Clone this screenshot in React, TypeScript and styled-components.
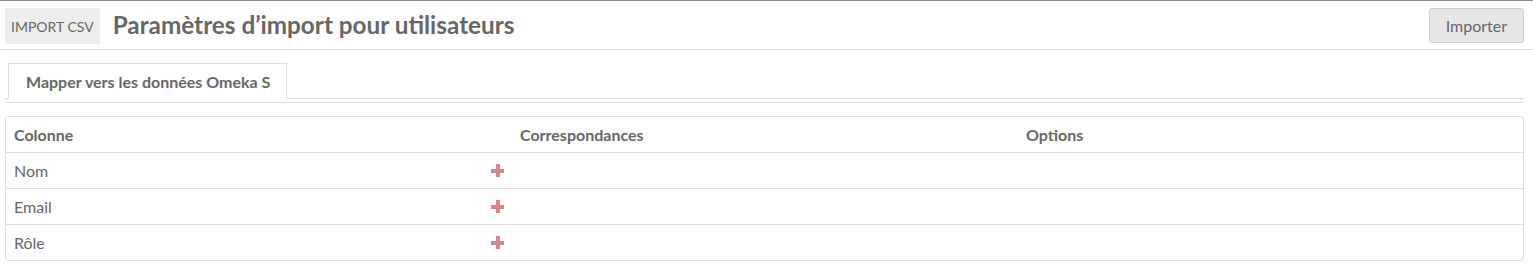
import React from "react";
import styled, { createGlobalStyle } from "styled-components";

const Global = createGlobalStyle`
  html, body { margin: 0; padding: 0; background: #fff; }
  body { font-family: Lato, "Open Sans", sans-serif; color: #676767; }
  * { box-sizing: border-box; }
`;

const Page = styled.div`
  border-top: 1px solid #8a8a8a;
  width: 1533px;
`;

const Header = styled.header`
  display: flex;
  align-items: center;
  height: 49px;
  padding: 7px 9px 5px 5px;
  border-bottom: 1px solid #dfdfdf;
`;

const Section = styled.span`
  display: flex;
  align-items: center;
  height: 36px;
  padding: 0 6px;
  background: #ededed;
  font-size: 14px;
  color: #676767;
`;

const Title = styled.h1`
  margin: 0 0 0 13px;
  font-size: 24.3px;
  font-weight: 700;
  color: #676767;
  flex: 1;
  line-height: 1;
  padding-bottom: 2px;
`;

const Button = styled.button`
  height: 35px;
  padding: 0 16px;
  margin-top: -1px;
  font-family: Lato, sans-serif;
  font-size: 16px;
  color: #676767;
  background: #e6e6e6;
  border: 1px solid #cfcfcf;
  border-radius: 3px;
`;

const TabStrip = styled.div`
  display: flex;
  margin: 13px 9px 0 5px;
  padding-left: 3px;
  border-bottom: 1px solid #dfdfdf;
`;

const Tab = styled.div`
  height: 36px;
  margin-bottom: -1px;
  padding: 0 16px 0 17px;
  display: flex;
  align-items: center;
  font-size: 16px;
  font-weight: 700;
  color: #676767;
  background: #fff;
  border: 1px solid #dfdfdf;
  border-bottom-color: #fff;
`;

const Panel = styled.div`
  margin: 3px 9px 0 5px;
  padding-top: 13px;
  border-top: 1px solid #dfdfdf;
`;

const Table = styled.div`
  border: 1px solid #dfdfdf;
  border-radius: 3px;
`;

const Row = styled.div<{ $head?: boolean }>`
  display: grid;
  grid-template-columns: 506px 506px 1fr;
  height: 35px;
  font-weight: ${(p) => (p.$head ? 700 : 400)};
  font-size: 16px;
  & + & { height: 36px; border-top: 1px solid #dfdfdf; }
`;

const Cell = styled.div`
  display: flex;
  align-items: center;
  justify-content: space-between;
  padding: 0 8px 0 8px;
`;

const Plus = styled.span`
  position: relative;
  width: 13px;
  height: 13px;
  &::before, &::after {
    content: "";
    position: absolute;
    background: #d4888a;
  }
  &::before { left: 0; top: 4.5px; width: 13px; height: 4px; }
  &::after { top: 0; left: 4.5px; width: 4px; height: 13px; }
`;

const rows = ["Nom", "Email", "Rôle"];

export default function App() {
  return (
    <Page>
      <Global />
      <Header>
        <Section>IMPORT CSV</Section>
        <Title>Paramètres d’import pour utilisateurs</Title>
        <Button>Importer</Button>
      </Header>
      <TabStrip>
        <Tab>Mapper vers les données Omeka S</Tab>
      </TabStrip>
      <Panel>
        <Table>
          <Row $head>
            <Cell>Colonne</Cell>
            <Cell>Correspondances</Cell>
            <Cell>Options</Cell>
          </Row>
          {rows.map((r) => (
            <Row key={r}>
              <Cell>
                {r}
                <Plus />
              </Cell>
              <Cell />
              <Cell />
            </Row>
          ))}
        </Table>
      </Panel>
    </Page>
  );
}
